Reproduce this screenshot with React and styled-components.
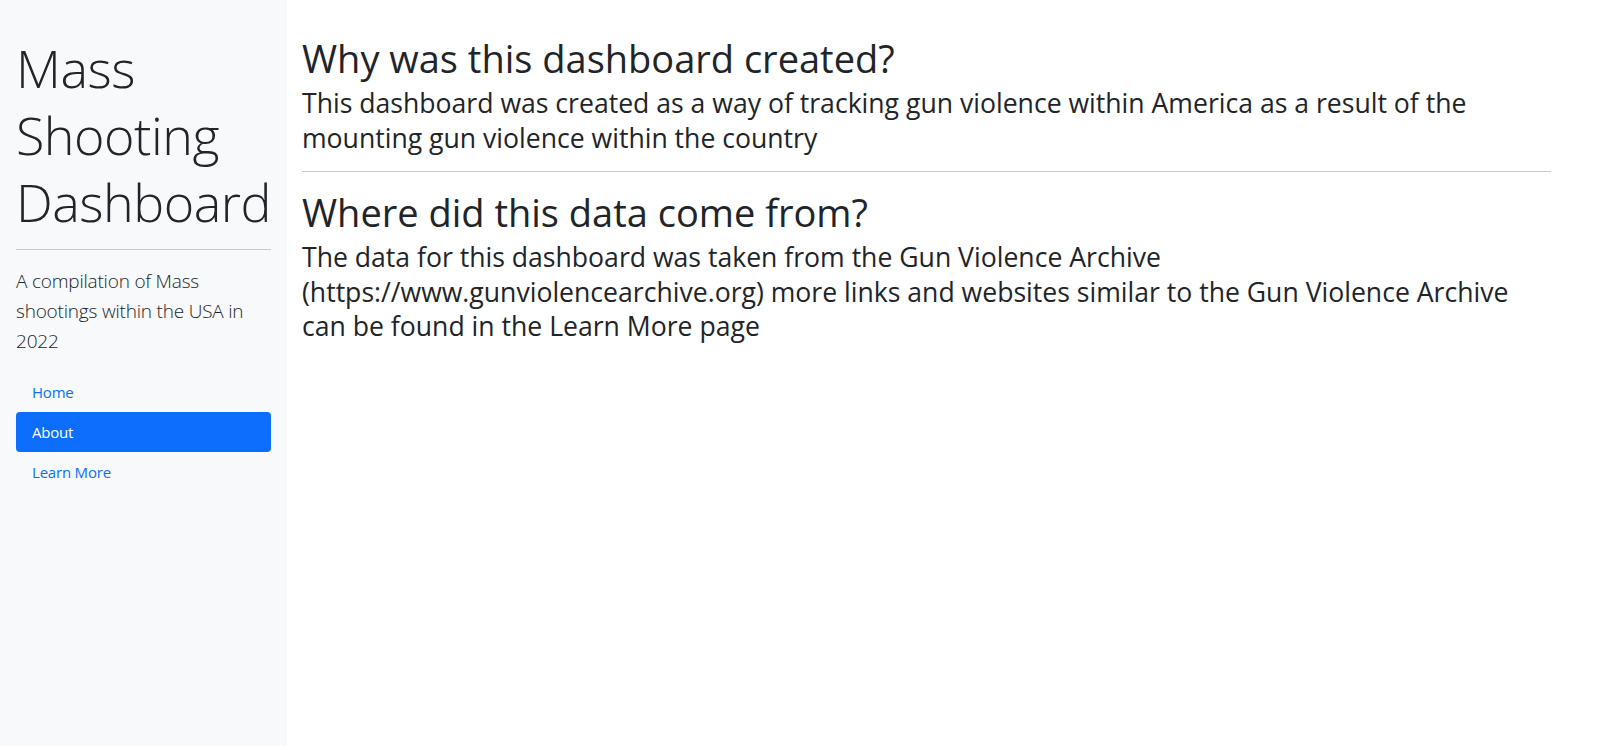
import styled, { createGlobalStyle } from "styled-components";

const GlobalStyle = createGlobalStyle`
  html, body {
    margin: 0;
    padding: 0;
    background: #fff;
  }
  body {
    font-family: "Open Sans", "Noto Sans", "Liberation Sans", sans-serif;
    color: #212529;
  }
  * {
    box-sizing: border-box;
  }
`;

const Layout = styled.div`
  display: flex;
  min-height: 746px;
`;

const Sidebar = styled.aside`
  width: 287px;
  flex-shrink: 0;
  background: #f8f9fa;
  padding: 31px 16px 16px;
`;

const Title = styled.h1`
  margin: 3px 0 -3px;
  font-size: 52px;
  font-weight: 300;
  line-height: 67.2px;
  letter-spacing: -0.5px;
`;

const Rule = styled.hr`
  margin: 16px 0;
  border: 0;
  border-top: 1px solid #c8c9ca;
`;

const Lead = styled.p`
  margin: 0 0 16px;
  font-size: 19px;
  font-weight: 300;
  line-height: 30px;
  letter-spacing: -0.2px;
`;

const Nav = styled.nav`
  display: flex;
  flex-direction: column;
`;

const NavLink = styled.a`
  display: block;
  padding: 8px 16px;
  font-size: 15px;
  line-height: 24px;
  letter-spacing: -0.2px;
  border-radius: 4px;
  text-decoration: none;
  cursor: pointer;
  color: ${(p) => (p.$active ? "#fff" : "#0d6efd")};
  background: ${(p) => (p.$active ? "#0d6efd" : "transparent")};
`;

const Main = styled.main`
  flex: 1;
  padding: 32px 48px 0 15px;
`;

const Heading = styled.h1`
  margin: 2px 0 4px;
  font-size: 38px;
  font-weight: 400;
  line-height: 48px;
`;

const Body = styled.p`
  margin: 0;
  font-size: 26.6px;
  line-height: 34.5px;
`;

function App() {
  return (
    <>
      <GlobalStyle />
      <Layout>
        <Sidebar>
          <Title>Mass Shooting Dashboard</Title>
          <Rule />
          <Lead>A compilation of Mass shootings within the USA in 2022</Lead>
          <Nav>
            <NavLink>Home</NavLink>
            <NavLink $active>About</NavLink>
            <NavLink>Learn More</NavLink>
          </Nav>
        </Sidebar>
        <Main>
          <Heading>Why was this dashboard created?</Heading>
          <Body>
            This dashboard was created as a way of tracking gun violence within
            America as a result of the mounting gun violence within the country
          </Body>
          <Rule />
          <Heading>Where did this data come from?</Heading>
          <Body>
            The data for this dashboard was taken from the Gun Violence Archive
            (https://www.gunviolencearchive.org) more links and websites similar
            to the Gun Violence Archive can be found in the Learn More page
          </Body>
        </Main>
      </Layout>
    </>
  );
}

export default App;
